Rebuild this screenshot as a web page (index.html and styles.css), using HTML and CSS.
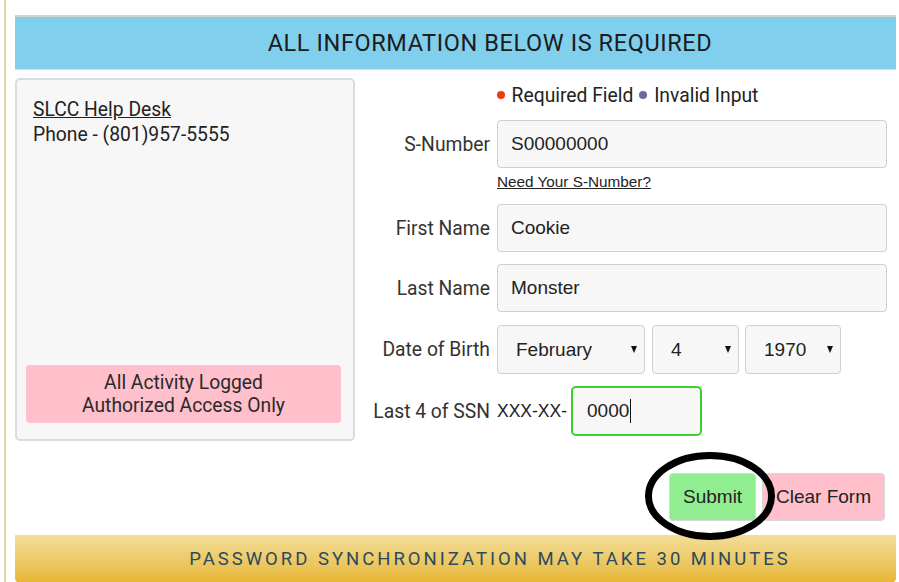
FILE: index.html
```html
<!DOCTYPE html>
<html lang="en">
<head>
<meta charset="utf-8">
<title>Password Reset</title>
<link rel="stylesheet" href="styles.css">
</head>
<body>
<div class="page">
  <div class="banner">ALL INFORMATION BELOW IS REQUIRED</div>

  <div class="main">
    <aside class="info-panel">
      <a class="help-link" href="#">SLCC Help Desk</a>
      <div class="phone">Phone - (801)957-5555</div>
      <div class="notice">All Activity Logged<br>Authorized Access Only</div>
    </aside>

    <form class="form-col">
      <div class="legend"><span class="dot dot-req"></span>Required Field <span class="dot dot-inv"></span>Invalid Input</div>

      <div class="row">
        <label class="label" for="snum">S-Number</label>
        <input class="field" id="snum" type="text" value="S00000000">
      </div>
      <div class="row row-link">
        <span></span>
        <a class="small-link" href="#">Need Your S-Number?</a>
      </div>

      <div class="row">
        <label class="label" for="fname">First Name</label>
        <input class="field" id="fname" type="text" value="Cookie">
      </div>

      <div class="row row-spaced">
        <label class="label" for="lname">Last Name</label>
        <input class="field" id="lname" type="text" value="Monster">
      </div>

      <div class="row">
        <label class="label" for="month">Date of Birth</label>
        <div class="dob">
          <span class="select-wrap w-month"><select class="select" id="month"><option>February</option></select></span>
          <span class="select-wrap w-day"><select class="select"><option>4</option></select></span>
          <span class="select-wrap w-year"><select class="select"><option>1970</option></select></span>
        </div>
      </div>

      <div class="row row-last">
        <label class="label" for="ssn">Last 4 of SSN</label>
        <div class="ssn">
          <span class="ssn-prefix">XXX-XX-</span>
          <span class="ssn-box"><span class="ssn-text">0000</span><span class="caret"></span></span>
        </div>
      </div>
    </form>
  </div>

  <div class="actions">
    <span class="submit-wrap">
      <button class="btn btn-submit" type="button">Submit</button>
      <svg class="ring" width="130" height="88" viewBox="0 0 130 88" aria-hidden="true">
        <ellipse cx="65" cy="44" rx="61.5" ry="40.5" fill="none" stroke="#000" stroke-width="7"/>
      </svg>
    </span>
    <button class="btn btn-clear" type="button">Clear Form</button>
  </div>

  <div class="footer-bar">PASSWORD SYNCHRONIZATION MAY TAKE 30 MINUTES</div>
</div>
</body>
</html>
```

FILE: styles.css
```css
* { box-sizing: border-box; }

html, body {
  margin: 0;
  background: #fff;
  height: 100%;
  overflow: hidden;
}

body {
  padding-left: 4px;
  font-family: Roboto, "Liberation Sans", Arial, sans-serif;
  color: #333;
}

.page {
  border-left: 2px solid #e6d3a8;
  min-height: 100%;
  padding: 15px 5px 0 9px;
  width: 897px;
}

/* top notice strip */
.banner {
  height: 55px;
  background: #7fcfed;
  border-top: 2px solid #d2d2d2;
  border-bottom: 1px solid #dcdcdc;
  display: flex;
  align-items: center;
  justify-content: center;
  padding-left: 69px;
  font-size: 23.5px;
  letter-spacing: 0.6px;
  color: #1c1c1c;
}

.main {
  display: flex;
  gap: 5px;
  margin-top: 8px;
}

/* left info card */
.info-panel {
  width: 340px;
  background: #f7f7f7;
  border: 2px solid #dcdcdc;
  border-radius: 5px;
  padding: 17px 12px 16px 9px;
  display: flex;
  flex-direction: column;
}

.help-link {
  margin-left: 7px;
  color: #222;
  font-size: 19.3px;
  line-height: 25px;
  text-decoration: underline;
  align-self: flex-start;
}

.phone {
  margin-left: 7px;
  font-size: 19.3px;
  line-height: 25px;
  color: #222;
}

.notice {
  margin-top: auto;
  background: #ffc0cb;
  border-radius: 4px;
  text-align: center;
  font-size: 19.3px;
  line-height: 23px;
  padding: 6px 0;
  color: #2a2a2a;
}

/* right form column */
.form-col {
  flex: 1;
  padding: 0 9px 5px 0;
  margin: 0;
}

.legend {
  text-align: center;
  font-size: 19.3px;
  line-height: 24px;
  padding-top: 6px;
  margin-bottom: 12px;
  padding-left: 8px;
  color: #222;
}

.dot {
  display: inline-block;
  width: 8px;
  height: 8px;
  border-radius: 50%;
  margin-right: 7px;
  vertical-align: 3px;
}
.dot-req { background: #ef3b12; }
.dot-inv { background: #6a6a9c; margin-left: 1px; }

.row {
  display: grid;
  grid-template-columns: 130px 1fr;
  column-gap: 7px;
  align-items: center;
  margin-bottom: 12px;
}

.row-link { margin-top: -7px; margin-bottom: 14px; }
.row-spaced { margin-bottom: 13px; }
.row-last { margin-bottom: 0; }

.label {
  text-align: right;
  font-size: 19.3px;
  color: #333;
  white-space: nowrap;
}

.field {
  height: 48px;
  width: 100%;
  border: 1px solid #cfcfcf;
  border-radius: 4px;
  background: #f7f7f7;
  padding: 0 13px;
  font-family: "Liberation Sans", Arial, sans-serif;
  font-size: 19px;
  color: #222;
  outline: none;
}

.small-link {
  font-family: "Liberation Sans", Arial, sans-serif;
  font-size: 15.3px;
  line-height: 17px;
  color: #222;
  text-decoration: underline;
}

/* date of birth selects */
.dob {
  display: flex;
  gap: 7px;
}

.select-wrap {
  position: relative;
  display: block;
}

.select-wrap::after {
  content: "";
  position: absolute;
  right: 8px;
  top: 21px;
  border-left: 3.5px solid transparent;
  border-right: 3.5px solid transparent;
  border-top: 7px solid #111;
  pointer-events: none;
}

.w-month { width: 148px; }
.w-day { width: 87px; margin-right: -1px; }
.w-year { width: 96px; }

.select {
  appearance: none;
  -webkit-appearance: none;
  width: 100%;
  height: 49px;
  border: 1px solid #cfcfcf;
  border-radius: 4px;
  background: #f7f7f7;
  padding: 0 0 0 18px;
  font-family: "Liberation Sans", Arial, sans-serif;
  font-size: 19px;
  color: #222;
}

/* last four of SSN */
.ssn {
  display: flex;
  align-items: center;
}

.ssn-prefix {
  font-family: "Liberation Sans", Arial, sans-serif;
  font-size: 17.5px;
  color: #222;
  width: 74px;
}

.ssn-box {
  width: 131px;
  height: 50px;
  border: 2px solid #3ccf2c;
  border-radius: 5px;
  background: #f7f7f7;
  display: flex;
  align-items: center;
  padding-left: 14px;
  font-family: "Liberation Sans", Arial, sans-serif;
  font-size: 19px;
  color: #222;
}

.caret {
  width: 1px;
  height: 24px;
  background: #111;
  margin-left: 1px;
}

/* action buttons */
.actions {
  display: flex;
  justify-content: flex-end;
  gap: 6px;
  margin-top: 32px;
  padding-right: 11px;
}

.submit-wrap { position: relative; display: block; }

.btn {
  height: 48px;
  border: 1px solid #d8d8d8;
  border-radius: 4px;
  font-family: "Liberation Sans", Arial, sans-serif;
  font-size: 19px;
  color: #222;
  padding: 0 13px;
}

.btn-submit { width: 87px; background: #90ee90; }
.btn-clear { width: 123px; background: #ffc0cb; }

.ring {
  position: absolute;
  left: -24px;
  top: -21px;
  pointer-events: none;
  z-index: 2;
}

/* bottom notice strip */
.footer-bar {
  margin-top: 14px;
  height: 48px;
  border-radius: 0 0 5px 5px;
  background: linear-gradient(#f3de98, #ebc55b 65%, #e8b535);
  display: flex;
  align-items: center;
  justify-content: center;
  padding: 0 0 0 69px;
  font-size: 18.5px;
  letter-spacing: 3px;
  color: #2d4a5c;
}
```
